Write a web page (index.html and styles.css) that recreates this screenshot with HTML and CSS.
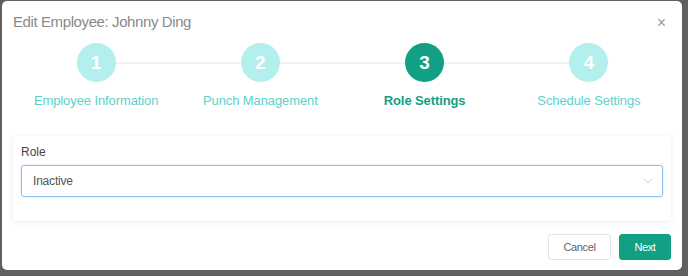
FILE: index.html
```html
<!DOCTYPE html>
<html lang="en">
<head>
    <meta charset="UTF-8">
    <meta name="viewport" content="width=device-width, initial-scale=1.0">
    <title>Edit Employee</title>
    <link rel="stylesheet" href="styles.css">
</head>
<body>
    <div class="modal">
        <div class="modal-header">
            <h2 class="modal-title">Edit Employee: Johnny Ding</h2>
            <span class="close-btn">&times;</span>
        </div>

        <div class="steps">
            <div class="step done">
                <div class="step-circle">1</div>
                <div class="step-label">Employee Information</div>
            </div>
            <div class="step done">
                <div class="step-circle">2</div>
                <div class="step-label">Punch Management</div>
            </div>
            <div class="step active">
                <div class="step-circle">3</div>
                <div class="step-label">Role Settings</div>
            </div>
            <div class="step">
                <div class="step-circle">4</div>
                <div class="step-label">Schedule Settings</div>
            </div>
        </div>

        <div class="card">
            <label class="field-label" for="role">Role</label>
            <div class="select">
                <span id="role">Inactive</span>
                <svg class="chevron" width="10" height="6" viewBox="0 0 10 6">
                    <path d="M0.5 0.5 L5 5 L9.5 0.5" fill="none" stroke="#c8c8c8" stroke-width="1"/>
                </svg>
            </div>
        </div>

        <div class="modal-footer">
            <button class="btn btn-cancel">Cancel</button>
            <button class="btn btn-next">Next</button>
        </div>
    </div>
</body>
</html>
```

FILE: styles.css
```css
body {
    margin: 0;
    padding: 1px 6px 6px 2px;
    background-color: #5f5f5f;
    font-family: "Liberation Sans", Arial, sans-serif;
}
.modal {
    width: 680px;
    height: 269px;
    box-sizing: border-box;
    background: white;
    border-radius: 5px;
    padding: 0 11px;
    display: flex;
    flex-direction: column;
}
.modal-header {
    display: flex;
    justify-content: space-between;
    align-items: center;
    height: 40px;
    padding: 0 5px 0 0;
}
.modal-title {
    margin: 0;
    font-size: 15px;
    letter-spacing: -0.4px;
    font-weight: normal;
    color: #8a8a8a;
}
.close-btn {
    font-size: 16px;
    color: #9a9a9a;
    line-height: 1;
    margin-top: 4px;
}
.steps {
    display: flex;
    padding: 2px 0 0 1px;
}
.step {
    flex: 1;
    display: flex;
    flex-direction: column;
    align-items: center;
    position: relative;
}
.step:not(:last-child)::after {
    content: "";
    position: absolute;
    top: 19px;
    left: calc(50% + 20px);
    right: calc(-50% + 20px);
    height: 2px;
    background: #f2f2f2;
}
.step-circle {
    width: 39px;
    height: 39px;
    border-radius: 50%;
    background: #b3efed;
    color: white;
    font-size: 19px;
    font-weight: bold;
    display: flex;
    align-items: center;
    justify-content: center;
}
.step-label {
    margin-top: 9px;
    font-size: 13px;
    letter-spacing: -0.1px;
    line-height: 20px;
    color: #5dd1ca;
}
.step.active .step-circle {
    background: #12a084;
}
.step.active .step-label {
    color: #12a084;
    font-weight: bold;
}
.card {
    margin-top: 25px;
    padding: 7px 8px 24px;
    border-radius: 4px;
    box-shadow: 0 1px 6px rgba(0, 0, 0, 0.08);
}
.field-label {
    display: block;
    font-size: 12px;
    line-height: 18px;
    color: #444;
    margin-bottom: 4px;
}
.select {
    height: 32px;
    box-sizing: border-box;
    border: 1px solid #8cc0f5;
    border-radius: 3px;
    box-shadow: 0 0 2px rgba(64, 158, 255, 0.35);
    padding: 0 9px 0 11px;
    display: flex;
    align-items: center;
    justify-content: space-between;
    font-size: 12px;
    letter-spacing: -0.2px;
    color: #555;
}
.modal-footer {
    display: flex;
    justify-content: flex-end;
    gap: 8px;
    padding-top: 13px;
}
.btn {
    height: 26px;
    border-radius: 3px;
    font-family: "Liberation Sans", Arial, sans-serif;
    font-size: 11px;
    letter-spacing: -0.4px;
    cursor: pointer;
}
.btn-cancel {
    width: 63px;
    background: white;
    border: 1px solid #e2e4e8;
    color: #606266;
}
.btn-next {
    width: 52px;
    background: #12a084;
    border: 1px solid #12a084;
    color: white;
}
```
